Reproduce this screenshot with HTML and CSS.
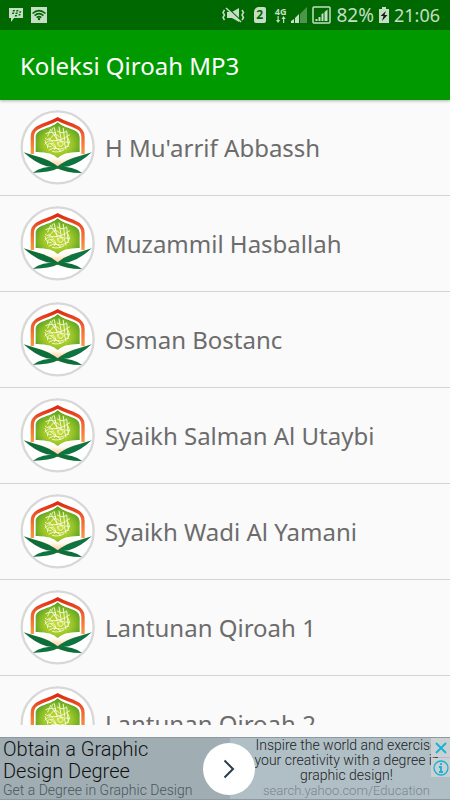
FILE: index.html
```html
<!DOCTYPE html>
<html lang="id">
<head>
    <meta charset="UTF-8">
    <meta name="viewport" content="width=device-width, initial-scale=1.0">
    <title>Koleksi Qiroah MP3</title>
    <link rel="stylesheet" href="styles.css">
</head>
<body>
    <!-- Shared logo -->
    <svg class="defs" aria-hidden="true">
        <defs>
            <linearGradient id="arch" x1="0" y1="0" x2="0" y2="1">
                <stop offset="0" stop-color="#df2a12"/>
                <stop offset="0.4" stop-color="#ee6030"/>
                <stop offset="1" stop-color="#f99a48"/>
            </linearGradient>
            <radialGradient id="dome" cx="0.5" cy="0.6" r="0.62">
                <stop offset="0" stop-color="#c9dc3c"/>
                <stop offset="0.5" stop-color="#a0c92a"/>
                <stop offset="1" stop-color="#4d9a20"/>
            </radialGradient>
            <linearGradient id="page" x1="0" y1="0" x2="0" y2="1">
                <stop offset="0" stop-color="#ffffff"/>
                <stop offset="0.45" stop-color="#fff8ec"/>
                <stop offset="1" stop-color="#fcc88c"/>
            </linearGradient>
        </defs>
        <symbol id="logo" viewBox="15 15 225 225">
            <circle cx="128" cy="127" r="108" fill="#fff" stroke="#d8d8d8" stroke-width="7"/>
            <path fill="none" stroke="url(#arch)" stroke-width="10" d="M52 148 V96 C52 62 88 64 128 42 C168 64 204 62 204 96 V148"/>
            <path fill="url(#dome)" d="M62 141 V98 C62 70 104 74 128 52 C152 74 194 70 194 98 V141 Q146 140 128 159 Q110 140 62 141 Z"/>
            <path fill="url(#page)" d="M48 150 L64 145 Q112 146 128 164 Q144 146 192 145 L209 150 Q160 160 128 186 Q96 160 48 150 Z"/>
            <path fill="#0f6e38" d="M26 142 Q56 152 80 158 Q108 167 128 184 Q176 184 201 204 Q157 205 126 190 Q112 186 95 184 Q60 174 26 142 Z"/>
            <path fill="#0f7440" d="M230 142 Q200 152 176 158 Q148 167 128 184 Q80 184 54 203 Q99 204 130 190 Q144 186 161 184 Q196 174 230 142 Z"/>
            <g fill="none" stroke="#fdffe8" stroke-linecap="round" stroke-width="2.500">
                <path d="M92 86 Q112 74 120 94 Q130 112 164 112"/>
                <path d="M91 100 Q101 110 110 96 Q119 81 133 95"/>
                <path d="M90 117 Q99 105 116 107 Q138 109 164 89"/>
                <path d="M98 129 Q94 113 110 115 Q126 118 119 133"/>
                <path d="M118 68 L126 108 M132 66 L139 106 M145 70 L149 106 M155 78 L160 124"/>
                <path d="M107 73 L98 93 M114 69 Q102 84 122 84"/>
                <path d="M102 135 Q115 125 128 131 Q139 135 158 124"/>
                <path d="M128 114 Q140 104 145 117 Q141 128 132 123 Q128 118 128 114"/>
                <path d="M112 139 Q130 145 147 134 M91 107 Q94 127 108 125"/>
                <path d="M160 100 Q167 115 156 126 M148 113 L153 132"/>
                <path d="M127 78 Q141 88 153 80 M101 100 L115 112 M107 117 L137 138"/>
            </g>
        </symbol>
    </svg>

    <!-- Status bar -->
    <div class="status-bar">
        <div class="notifications">
            <svg width="16" height="14" viewBox="0 0 16 14" aria-hidden="true">
                <path fill="#c5dec5" d="M1 0 H15 V10 H6 L3 14 V10 H1 Z"/>
                <path fill="#006800" d="M5 2h2l-.4 1.5h-2zM8.5 2h2l-.4 1.5h-2zM4.3 4.6h2l-.4 1.5h-2zM7.8 4.6h2l-.4 1.5h-2zM11.5 3.3h1.8l-.4 1.5h-1.8zM7.1 7h2l-.4 1.5h-2zM10.8 6h1.8l-.4 1.5h-1.8z"/>
            </svg>
            <svg width="16" height="16" viewBox="0 0 16 16" aria-hidden="true">
                <path fill="#c5dec5" d="M0 0h16v16H0z"/>
                <path fill="none" stroke="#006800" stroke-width="1.6" d="M1.5 6.5Q8 .8 14.5 6.5M3.6 8.6Q8 4.8 12.4 8.6M5.7 10.6Q8 8.6 10.3 10.6"/>
                <circle cx="8" cy="12" r="1.2" fill="#006800"/>
            </svg>
        </div>
        <div class="system">
            <svg width="23" height="16" viewBox="0 0 23 16" aria-hidden="true">
                <path fill="#c5dec5" d="M5 5h5l7-4v14l-7-4H5z"/>
                <path fill="none" stroke="#006800" stroke-width="1.2" d="M5 .5l14 13"/>
                <path fill="none" stroke="#c5dec5" stroke-width="1.5" d="M4 1l15 14M2.500 3L1 5.500 2.500 8 1 10.500 2.500 13M20 3l1.500 2.500L20 8l1.500 2.500L20 13"/>
            </svg>
            <span class="sim">2</span>
            <span class="network">4G
                <svg width="10" height="7" viewBox="0 0 10 7" aria-hidden="true">
                    <path fill="#c5dec5" d="M0 4h1.500V0h1.200v4h1.500L2.100 7zM5.500 3L7.600 0l2.100 3H8.200v4H7V3z"/>
                </svg>
            </span>
            <svg width="16" height="16" viewBox="0 0 16 16" aria-hidden="true">
                <path fill="#4b964b" d="M9 7l7-7v16H9z"/>
                <path fill="#c5dec5" d="M0 16v-2l3-2v4zM4 16v-5l4-4v9z"/>
            </svg>
            <svg width="19" height="18" viewBox="0 0 19 18" aria-hidden="true">
                <rect x="1" y="1" width="17" height="16" rx="1" fill="none" stroke="#c5dec5" stroke-width="1.5"/>
                <path fill="#c5dec5" d="M3.500 15v-2h2v2zM6.500 15v-4h2v4zM9.500 15V8l2-1v8zM12.500 15V6L15.500 3.500V15z"/>
            </svg>
            <span class="percent">82%</span>
            <svg width="10" height="16" viewBox="0 0 10 16" aria-hidden="true">
                <path fill="#c5dec5" d="M3 0h4v2h3v14H0V2h3z"/>
                <path fill="#102010" d="M7 4L1.500 9H4.500L3 14 8.500 8H5.500z"/>
            </svg>
            <span class="clock">21:06</span>
        </div>
    </div>

    <header class="toolbar">
        <h1 class="title">Koleksi Qiroah MP3</h1>
    </header>

    <ul class="list">
        <li class="row"><svg class="logo" aria-hidden="true"><use href="#logo"/></svg><span class="name">H Mu'arrif Abbassh</span></li>
        <li class="row"><svg class="logo" aria-hidden="true"><use href="#logo"/></svg><span class="name">Muzammil Hasballah</span></li>
        <li class="row"><svg class="logo" aria-hidden="true"><use href="#logo"/></svg><span class="name">Osman Bostanc</span></li>
        <li class="row"><svg class="logo" aria-hidden="true"><use href="#logo"/></svg><span class="name">Syaikh Salman Al Utaybi</span></li>
        <li class="row"><svg class="logo" aria-hidden="true"><use href="#logo"/></svg><span class="name">Syaikh Wadi Al Yamani</span></li>
        <li class="row"><svg class="logo" aria-hidden="true"><use href="#logo"/></svg><span class="name">Lantunan Qiroah 1</span></li>
        <li class="row"><svg class="logo" aria-hidden="true"><use href="#logo"/></svg><span class="name">Lantunan Qiroah 2</span></li>
    </ul>

    <!-- Ad banner -->
    <div class="ad">
        <div class="ad-main">
            <div class="ad-headline">Obtain a Graphic<br>Design Degree</div>
            <div class="ad-sub">Get a Degree in Graphic Design</div>
        </div>
        <div class="ad-side">
            <div class="ad-text">Inspire the world and exercise<br>your creativity with a degree in<br>graphic design!</div>
            <div class="ad-link">search.yahoo.com/Education</div>
        </div>
        <button class="ad-go" type="button" aria-label="Open">
            <svg width="12" height="20" viewBox="0 0 12 20" aria-hidden="true"><path fill="none" stroke="#263f4b" stroke-width="2" d="M1.500 1.500L10 10l-8.500 8.500"/></svg>
        </button>
        <div class="ad-controls">
            <button class="ad-control" type="button" aria-label="Close">
                <svg width="12" height="12" viewBox="0 0 12 12" aria-hidden="true"><path stroke="#16b2d6" stroke-width="1.800" d="M1 1l10 10M11 1L1 11"/></svg>
            </button>
            <button class="ad-control" type="button" aria-label="Ad info">
                <svg width="16" height="16" viewBox="0 0 16 16" aria-hidden="true"><circle cx="8" cy="8" r="7" fill="none" stroke="#16b2d6" stroke-width="1.300"/><path fill="none" stroke="#16b2d6" stroke-width="1.800" d="M8 3v2M6 7h2v5M6 12h4"/></svg>
            </button>
        </div>
    </div>
</body>
</html>
```
FILE: styles.css
```css
* {
    box-sizing: border-box;
}

body {
    display: flex;
    flex-direction: column;
    height: 100vh;
    margin: 0;
    overflow: hidden;
    background-color: #fafafa;
    font-family: "Noto Sans", sans-serif;
}

.defs {
    position: absolute;
    width: 0;
    height: 0;
}

.status-bar {
    display: flex;
    flex: none;
    justify-content: space-between;
    align-items: center;
    height: 30px;
    padding: 0 10px 0 8px;
    background-color: #006800;
    color: #c5dec5;
}

.notifications,
.system {
    display: flex;
    align-items: center;
    gap: 7px;
}

.system {
    gap: 5px;
}

.sim {
    width: 12px;
    margin: 0 4px;
    border-radius: 2px;
    border-top-left-radius: 5px;
    background-color: #c5dec5;
    color: #006800;
    font-size: 12px;
    font-weight: 700;
    line-height: 16px;
    text-align: center;
}

.network {
    display: flex;
    flex-direction: column;
    align-items: center;
    font-size: 9px;
    font-weight: 700;
    line-height: 9px;
}

.percent,
.clock {
    font-size: 18px;
    line-height: 30px;
}

.percent {
    font-size: 19px;
}

.toolbar {
    position: relative;
    display: flex;
    flex: none;
    align-items: center;
    height: 70px;
    padding: 0 20px;
    background-color: #009a00;
    box-shadow: 0 1px 3px rgba(0, 0, 0, 0.3);
}

.title {
    margin: 0;
    color: #fff;
    font-size: 24px;
    font-weight: 400;
}

.list {
    flex: 1;
    min-height: 0;
    margin: 0 0 12px;
    padding: 0;
    overflow: hidden;
    list-style: none;
}

.row {
    display: flex;
    align-items: center;
    gap: 10px;
    height: 96px;
    padding: 0 20px;
    border-bottom: 1px solid #d4d4d4;
}

.logo {
    flex: none;
    width: 75px;
    height: 75px;
}

.name {
    color: #6c6c6c;
    font-size: 24px;
    white-space: nowrap;
}

.ad {
    position: relative;
    display: flex;
    flex: none;
    height: 63px;
    border-top: 1px solid #8d999e;
    border-bottom: 1px solid #8d999e;
    background-color: #b0bfc6;
    font-family: Roboto, sans-serif;
    font-weight: 300;
    white-space: nowrap;
}

.ad-main {
    flex: 0 0 51%;
    padding-left: 3px;
    background-color: #a0aeb4;
}

.ad-headline {
    color: #111;
    font-size: 20px;
    line-height: 22px;
}

.ad-sub {
    color: #4b565b;
    font-size: 14px;
    line-height: 16px;
}

.ad-side {
    flex: 1;
    min-width: 0;
    padding-left: 25px;
    color: #222;
    font-size: 14px;
    line-height: 15px;
}

.ad-text,
.ad-link {
    width: 184px;
    text-align: center;
}

.ad-link {
    color: #78868c;
    font-size: 13px;
}

.ad-go {
    position: absolute;
    top: 5px;
    left: 45%;
    display: flex;
    justify-content: center;
    align-items: center;
    width: 52px;
    height: 52px;
    padding: 0;
    border: 0;
    border-radius: 50%;
    background-color: #fff;
}

.ad-controls {
    position: absolute;
    top: 0;
    right: 0;
    display: flex;
    flex-direction: column;
    gap: 1px;
}

.ad-control {
    display: flex;
    justify-content: center;
    align-items: center;
    width: 19px;
    height: 19px;
    padding: 0;
    border: 0;
    background-color: #cbd0d2;
}
```
